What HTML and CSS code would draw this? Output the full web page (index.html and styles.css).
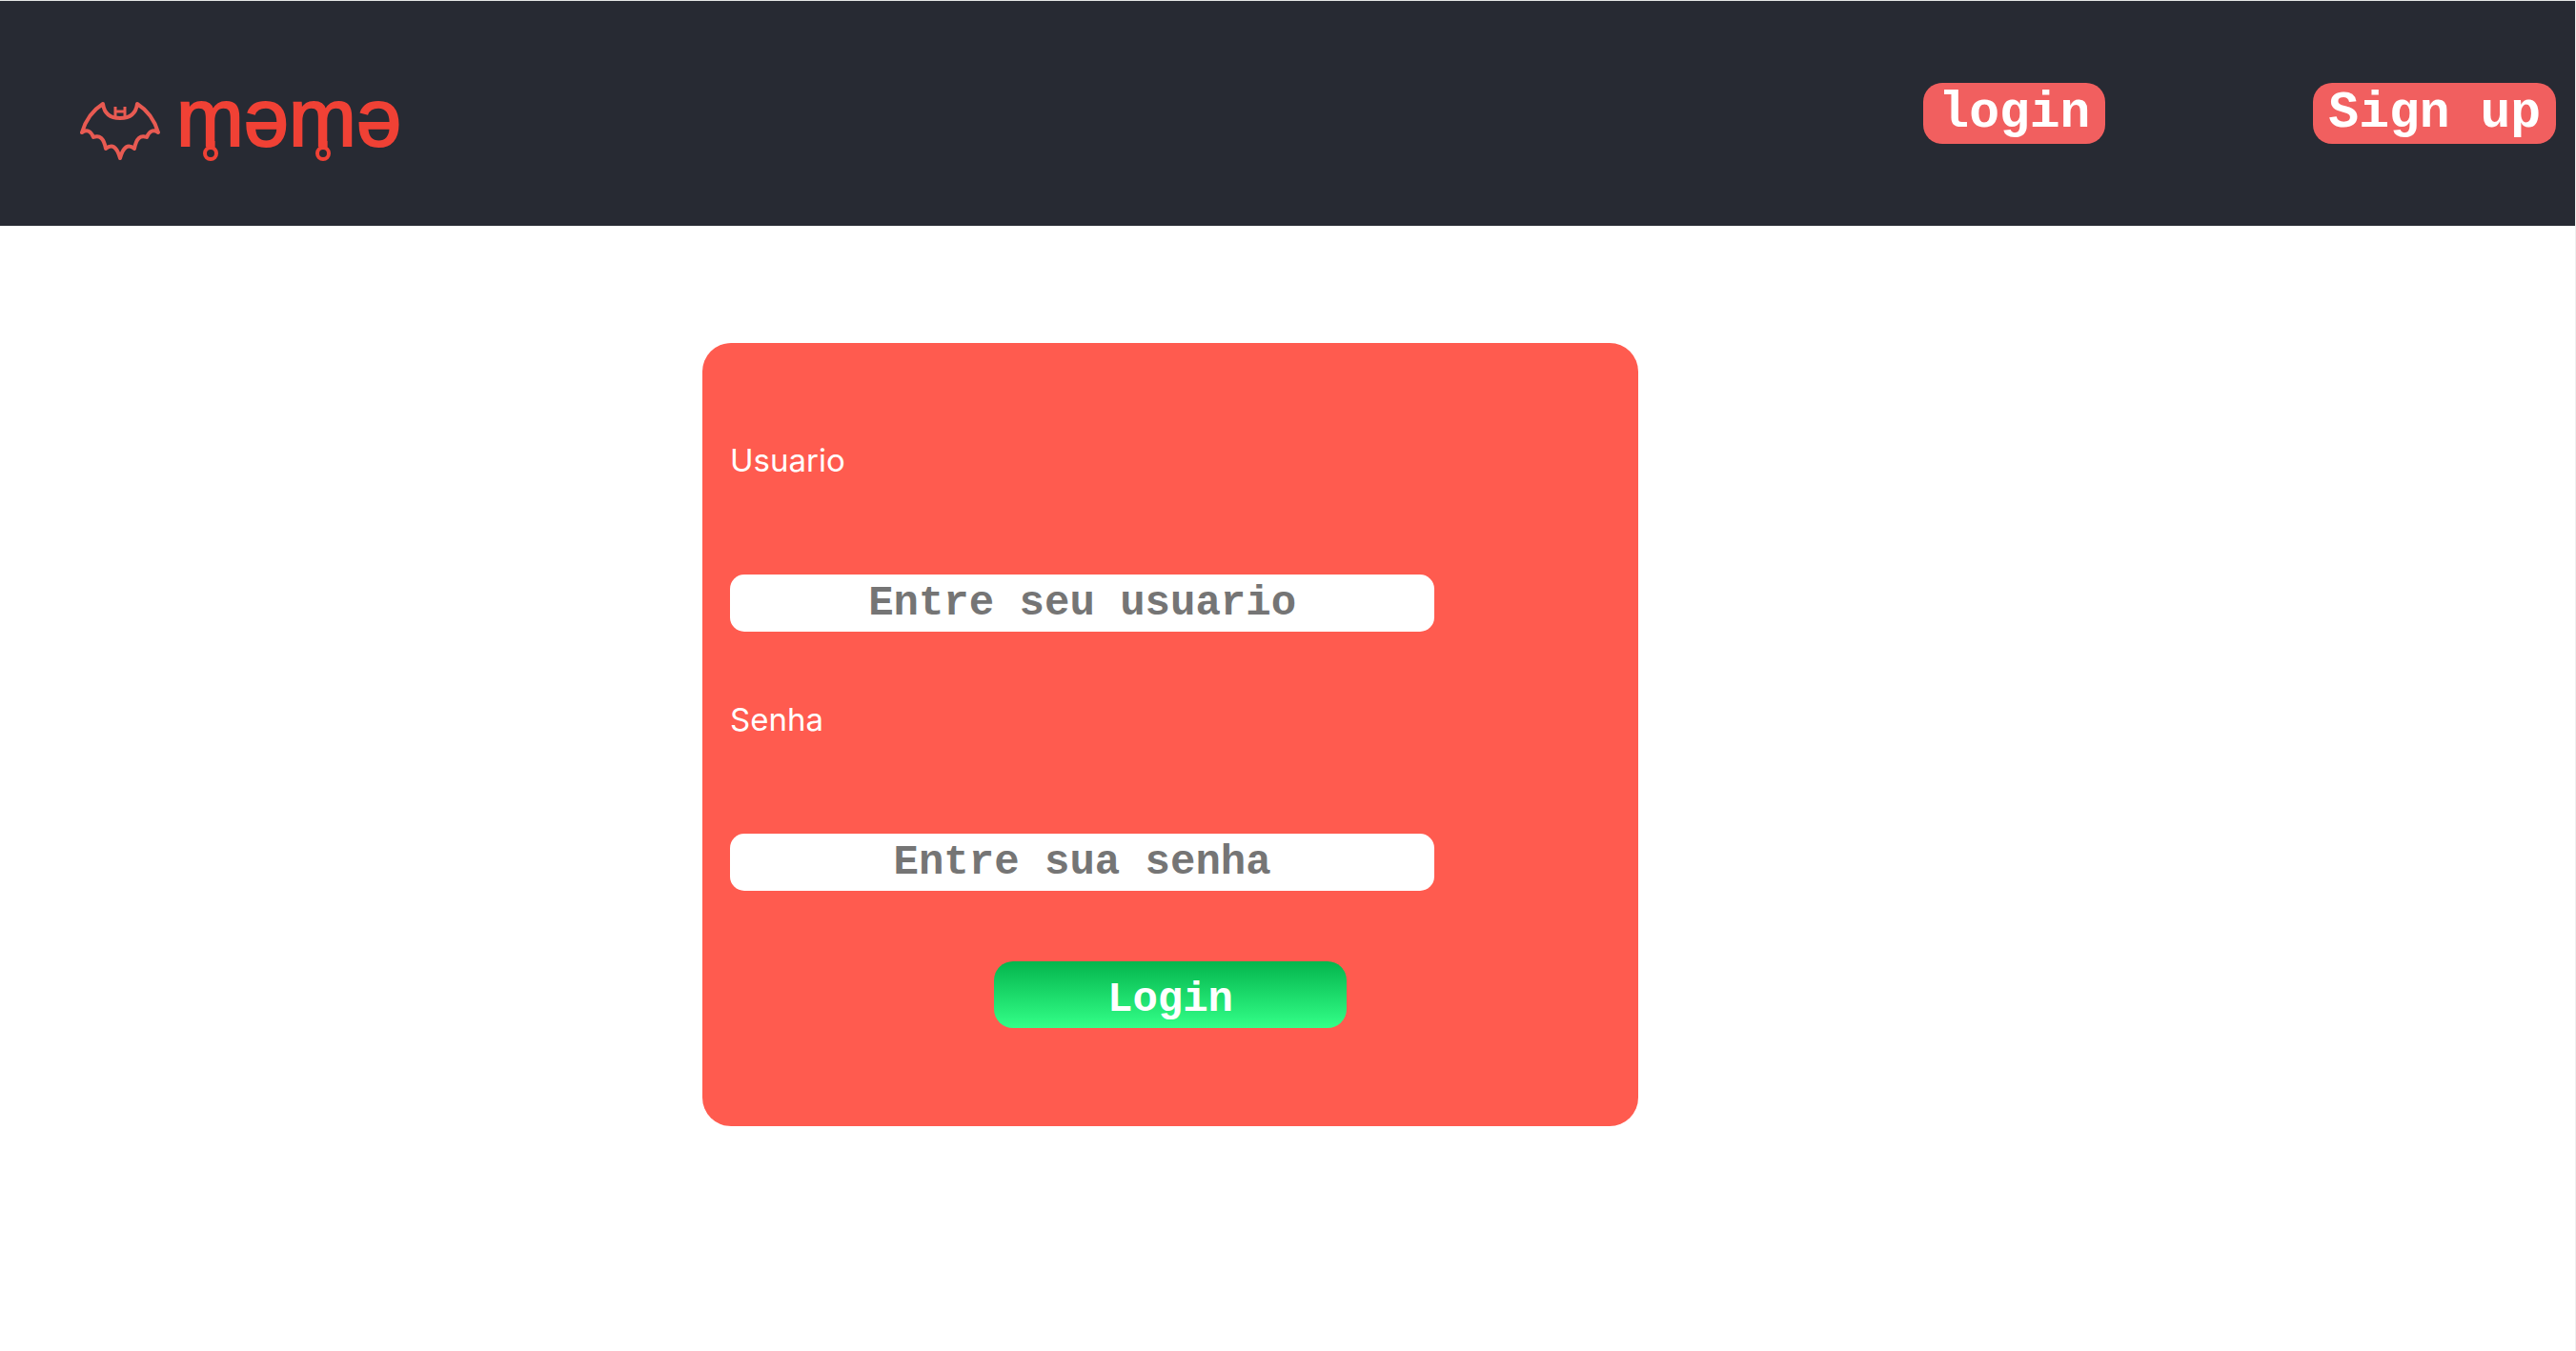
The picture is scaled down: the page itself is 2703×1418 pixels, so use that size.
FILE: index.html
```html
<!DOCTYPE html>
<html lang="pt-BR">
<head>
  <meta charset="utf-8">
  <meta name="viewport" content="width=device-width, initial-scale=1">
  <title>məmə - Login</title>
  <link rel="stylesheet" href="styles.css">
</head>
<body>
  <header class="header">
    <a class="logo" href="#" aria-label="məmə">
      <svg width="360" height="110" viewBox="84 73 360 110">
        <path class="logo-bat" d="M108 109 Q92 119 86 139 Q94 134 98 144 Q108 140 111 156 Q121 148 126 166 Q131 148 141 156 Q144 140 154 144 Q158 134 166 139 Q160 119 144 109 Q142 124 126 124 Q110 124 108 109 Z"/>
        <path class="logo-ears" d="M121 112 V122 M131 112 V122 M121 117 H131"/>
        <text class="logo-text" x="185" y="153">məmə</text>
        <g class="logo-rings">
          <path d="M221 148 V155 M339 148 V155"/>
          <circle cx="221" cy="161" r="6"/>
          <circle cx="339" cy="161" r="6"/>
        </g>
      </svg>
    </a>
    <nav class="nav">
      <button class="nav-button" type="button">login</button>
      <button class="nav-button" type="button">Sign up</button>
    </nav>
  </header>
  <main class="main">
    <form class="card">
      <div class="field">
        <label class="label" for="usuario">Usuario</label>
        <input class="input" id="usuario" type="text" placeholder="Entre seu usuario">
      </div>
      <div class="field">
        <label class="label" for="senha">Senha</label>
        <input class="input" id="senha" type="password" placeholder="Entre sua senha">
      </div>
      <button class="submit" type="button">Login</button>
    </form>
  </main>
</body>
</html>
```
FILE: styles.css
```css
* {
  box-sizing: border-box;
}

body {
  margin: 0;
  min-height: 100vh;
  border-top: 1px solid #e4e6e6;
  border-right: 1px solid #eeeeee;
  background: #ffffff;
  font-family: Inter, "Open Sans", sans-serif;
}

.header {
  display: flex;
  justify-content: space-between;
  align-items: flex-start;
  padding: 72px 20px 54px 84px;
  background: #272a33;
}

.logo svg {
  display: block;
}

.logo-bat,
.logo-ears {
  fill: none;
  stroke: #e85a52;
  stroke-width: 4;
  stroke-linejoin: round;
}

.logo-ears {
  stroke-width: 3;
}

.logo-text {
  fill: #f04135;
  stroke: #f04135;
  stroke-width: 2;
  font-family: "Liberation Sans", Arial, sans-serif;
  font-size: 85px;
}

.logo-rings {
  fill: none;
  stroke: #f04135;
  stroke-width: 4;
}

.logo-rings path {
  stroke-width: 9;
}

.nav {
  display: flex;
  gap: 218px;
  padding-top: 14px;
}

.nav-button,
.submit,
.input {
  border: 0;
  font-family: "Liberation Mono", "Courier New", monospace;
  font-weight: 700;
}

.nav-button {
  height: 64px;
  padding: 0 16px;
  border-radius: 20px;
  background: #f15f5f;
  color: #ffffff;
  font-size: 53px;
  line-height: 64px;
}

.main {
  display: grid;
  grid-template-columns: 737fr 982fr 983fr;
  padding-top: 123px;
}

.card {
  grid-column: 2;
  display: flex;
  flex-direction: column;
  gap: 60px;
  padding: 91px 29px 103px;
  border-radius: 30px;
  background: #ff5b4f;
}

.field {
  display: flex;
  flex-direction: column;
  gap: 88px;
}

.label {
  color: #ffffff;
  font-size: 33px;
  line-height: 64px;
}

.input {
  width: 80%;
  height: 60px;
  padding: 0 16px;
  border-radius: 15px;
  background: #ffffff;
  color: #757575;
  font-size: 44px;
  text-align: center;
}

.input::placeholder {
  color: #757575;
  opacity: 1;
}

.submit {
  align-self: center;
  width: 40%;
  height: 70px;
  margin-top: 14px;
  padding: 10px 0 0;
  border-radius: 20px;
  background: linear-gradient(#04b54d, #33ff88);
  color: #ffffff;
  font-size: 44px;
}
```
